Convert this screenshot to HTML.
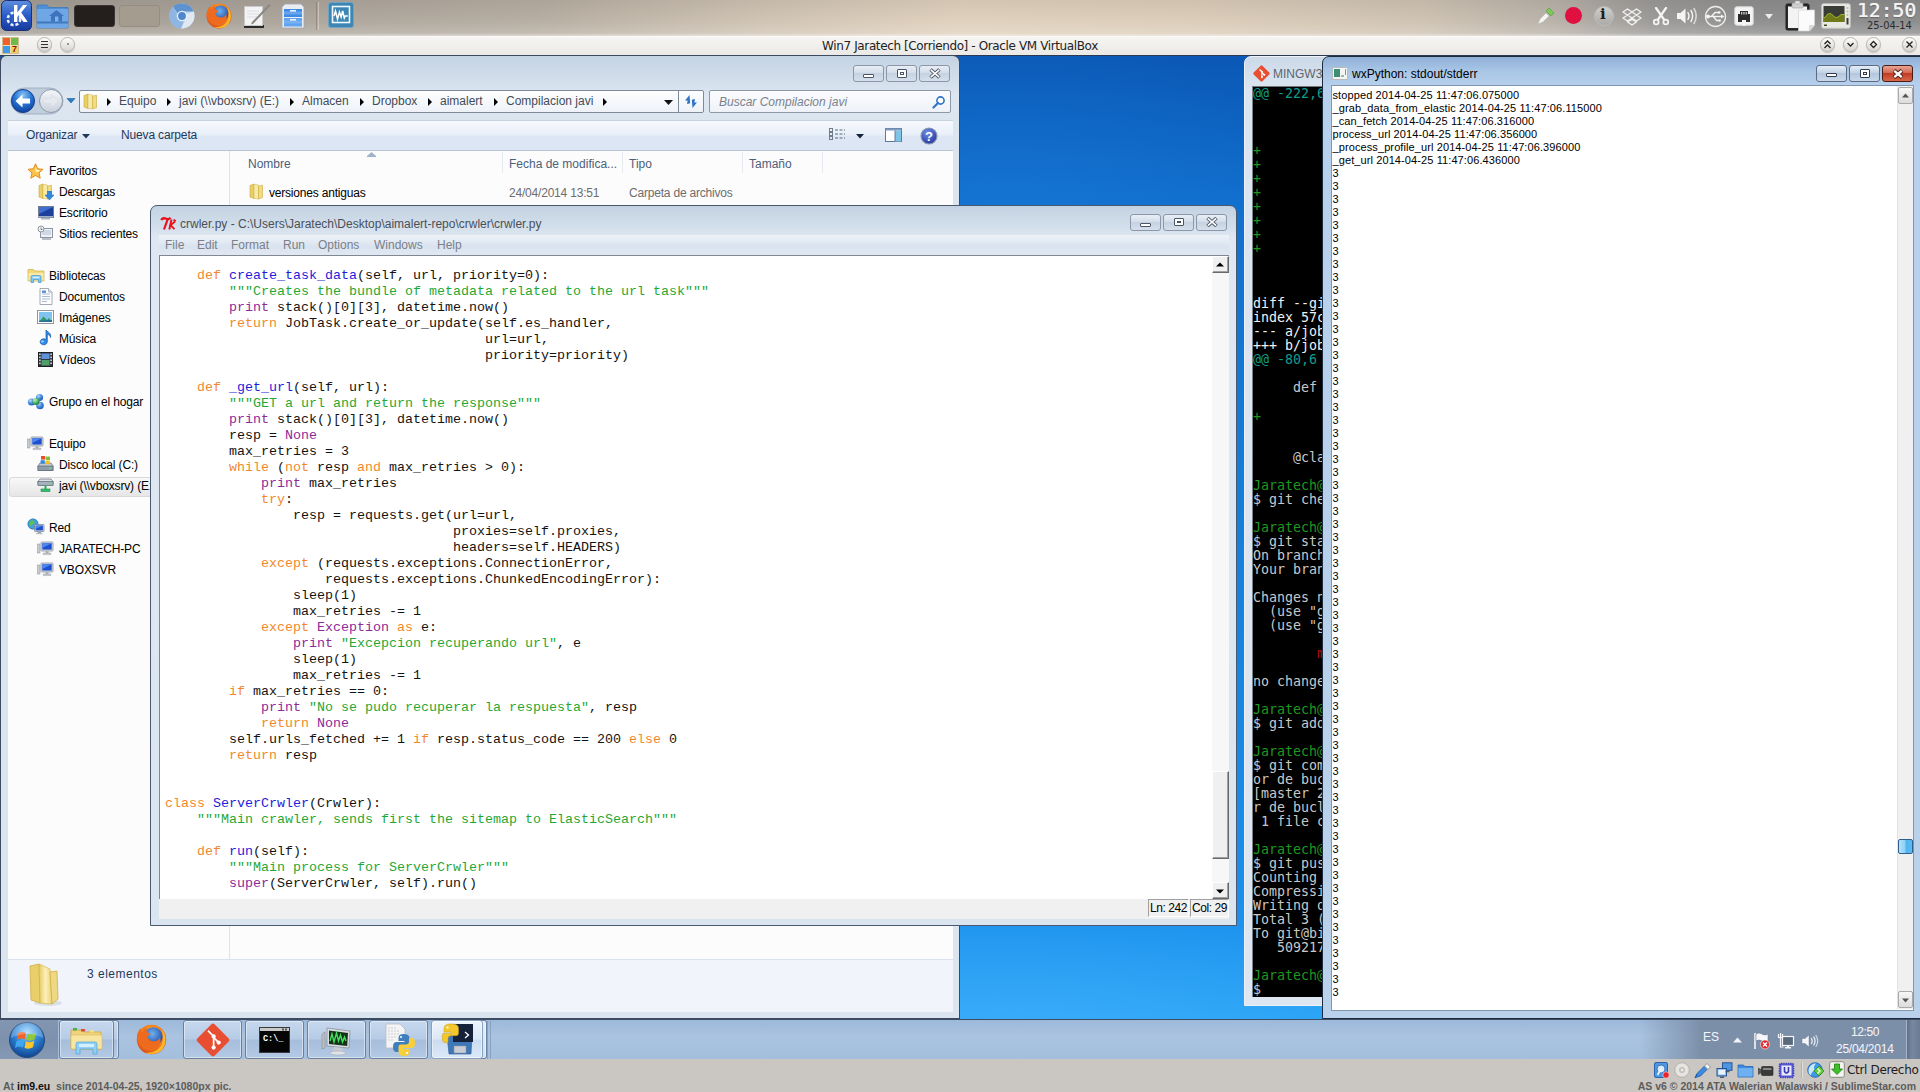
<!DOCTYPE html>
<html lang="es"><head><meta charset="utf-8"><title>Win7 Jaratech [Corriendo] - Oracle VM VirtualBox</title>
<style>
*{box-sizing:border-box}
html,body{margin:0;padding:0}
body{width:1920px;height:1092px;position:relative;overflow:hidden;background:#c9c6c2;font-family:"Liberation Sans",sans-serif;font-size:12px;color:#000}
.a{position:absolute}
.t{position:absolute;white-space:pre;line-height:1}
#kde{left:0;top:0;width:1920px;height:36px;background:linear-gradient(90deg,#9e9a94 0,#b3ada4 25%,#c9c0b2 50%,#d8cfc0 70%,#cfc8bc 100%)}
#vbt{left:0;top:36px;width:1920px;height:19px;background:linear-gradient(#f6f5f3,#ebe9e6);border-top:1px solid #fbfaf8}
#desk{left:0;top:55px;width:1920px;height:964px;background:radial-gradient(ellipse 500px 160px at 1000px 1000px,rgba(120,205,255,.32),rgba(120,205,255,0)),radial-gradient(ellipse 260px 200px at 1010px 150px,rgba(30,130,225,.28),rgba(30,130,225,0)),linear-gradient(180deg,#0b58b6 0,#1170ce 16%,#157fdc 50%,#1a8fec 88%,#24a0f6 100%);border-top:1px solid #2b3a52}
#tb{left:0;top:1019px;width:1920px;height:40px;background:linear-gradient(#9db9d9,#a9c3e0 40%,#a4bfdd);border-top:1px solid #3d4c63}
#vbs{left:0;top:1059px;width:1920px;height:22px;background:#cac7c3}
#ft{left:0;top:1081px;width:1920px;height:11px;background:#cac7c3}

#kde{background:linear-gradient(90deg,#a39d95 0,#aaa39a 12%,#b7aea2 28%,#d0c4b4 40%,#e0d1bd 50%,#dccdb9 62%,#cfc3b3 74%,#b9b2a9 81%,#9c9a98 86%,#8e8e8e 92%,#8c8c8c 100%)}
#kdeo{left:0;top:0;width:1920px;height:36px;background:linear-gradient(180deg,rgba(0,0,0,.06) 0,rgba(255,255,255,.02) 60%,rgba(255,255,255,.18) 92%,rgba(255,255,255,.55) 100%)}
#vbtx{left:0;top:3px;width:1920px;text-align:center;font-family:"DejaVu Sans","Liberation Sans",sans-serif;font-size:12px;color:#222;letter-spacing:-.38px}
.cb{position:absolute;top:0px;width:15px;height:15px;border-radius:8px;border:1px solid #b9b6b1;background:linear-gradient(#fdfdfc,#d8d5d0);box-shadow:0 1px 1px rgba(0,0,0,.18)}
.tk{position:absolute;top:0;height:39px;border:1px solid #68819f;border-radius:3px;background:linear-gradient(#c6d8ee 0,#b6cbe5 48%,#a6bedc 52%,#b4c9e4 100%);box-shadow:inset 0 0 0 1px rgba(255,255,255,.45)}
#tray{left:1640px;top:0;width:280px;height:39px;background:linear-gradient(90deg,rgba(124,143,169,0) 0,rgba(124,143,169,1) 22%,rgba(124,143,169,1) 100%)}
#tray .w{position:absolute;color:#f4f6f9;font-size:12px;line-height:1;white-space:pre}
#vbs .t,#ft .t{font-family:"DejaVu Sans","Liberation Sans",sans-serif}

#ex{left:-1px;top:55px;width:961px;height:964px;background:linear-gradient(#c4d3e3 0,#d0dcea 20px,#dde6f1 40px,#dbe5f0 64px,#dbe5f0 100%);border:1px solid #3d4a5f;border-left:2px solid #3d4a5f;border-radius:7px 7px 0 0;overflow:hidden}
#exa{left:77px;top:34px;width:625px;height:23px;border:1px solid #7e8a9a;background:linear-gradient(#fdfeff,#eef2f8);border-radius:2px}
#exa span{position:absolute;top:4px;font-size:12px;line-height:1;color:#444b56;white-space:pre}
#exa i{position:absolute;top:7px;width:0;height:0;border-left:4px solid #000;border-top:4px solid transparent;border-bottom:4px solid transparent}
#exs{left:707px;top:34px;width:242px;height:23px;border:1px solid #8c98a8;background:linear-gradient(#fbfcfe,#eef2f8);border-radius:2px}
#ext{left:6px;top:64px;width:945px;height:31px;background:linear-gradient(#f6f9fd 0,#e9f0f9 45%,#dce6f4 55%,#dde7f4 100%);border-top:1px solid #c8d3e0;border-bottom:1px solid #b8c4d4}
#ext span{position:absolute;top:8px;font-size:12px;line-height:1;color:#1e395b;white-space:pre;letter-spacing:-.15px}
#exb{left:6px;top:95px;width:945px;height:808px;background:#fcfcfc}
#exn{left:0;top:0;width:222px;height:808px;background:#fcfcfc;border-right:1px solid #d6e5f5}
#exn span{position:absolute;font-size:12px;line-height:1;color:#000;white-space:pre;letter-spacing:-.15px}
#exh span{position:absolute;top:7px;font-size:12px;line-height:1;color:#4c607a;white-space:pre}
#exd{left:6px;top:903px;width:945px;height:53px;background:#f1f5fb;border-top:1px solid #d9e3f0}

#id{left:150px;top:205px;width:1087px;height:721px;background:linear-gradient(#c3d2e2 0,#d2deeb 20px,#dfe8f2 32px,#dbe5f0 100%);border:1px solid #4b596e;border-radius:7px 7px 0 0}
#idt{left:29px;top:12px;font-size:12px;color:#4a5058}
#idm{left:8px;top:29px;width:1070px;height:19px;background:linear-gradient(#eef3f9,#d9e3ef 60%,#dfe7f2)}
#idm span{position:absolute;top:4px;font-size:12px;color:#7b8088;line-height:1;white-space:pre}
#idc{left:8px;top:49px;width:1070px;height:644px;background:#fff;border-top:1px solid #828790;border-left:1px solid #828790;overflow:hidden}
#idc pre{margin:0;position:absolute;left:5px;top:12px;font-family:"Liberation Mono",monospace;font-size:13.333px;line-height:16px;color:#141414}
#idc .k{color:#f2882e}#idc .f{color:#1c1cdc}#idc .s{color:#1fa838}#idc .b{color:#8e2a9a}
#ids{left:8px;top:693px;width:1070px;height:20px;background:#f0f0f0}
#idsb{left:1052px;top:0;width:17px;height:643px;background:#f7f7f7}
.sbk{position:absolute;left:0;width:17px;height:17px;background:#f0f0f0;border:1px solid;border-color:#fff #696969 #696969 #fff;box-shadow:inset -1px -1px 0 #a0a0a0}
.lc{position:absolute;top:0px;height:18px;border:1px solid;border-color:#a0a0a0 #fff #fff #a0a0a0;font-size:12px;line-height:16px;padding-left:1px;white-space:pre;letter-spacing:-0.45px}

#mg{left:1244px;top:56px;width:90px;height:950px;background:linear-gradient(#ccd9e8,#dbe5f1 30px,#dde6f1);border:1px solid #eef2f8;border-radius:7px 0 0 0;overflow:hidden}
#mgk{left:7px;top:29px;width:90px;height:911px;background:#000;border-left:1px solid #7a8288;border-top:1px solid #6f767c}
#mgk pre{margin:0;position:absolute;left:0px;top:0;font-family:"DejaVu Sans Mono","Liberation Mono",monospace;font-size:13.3px;line-height:14px;color:#c8c8c8;letter-spacing:0}
#mgk .g{color:#1f961f}#mgk .p{color:#1f961f;position:relative;top:1px}#mgk .c{color:#0f9d8c}#mgk .r{color:#b01010}#mgk .w{color:#f2f2f2}
#mgt{left:28px;top:11px;font-size:12px;color:#5d646c}
#wx{left:1322px;top:56px;width:600px;height:963px;background:linear-gradient(#8fb0d6 0,#a9c6e6 14px,#b7d0ec 30px,#b9d1ea 100%);border:1px solid #1c2b40;border-radius:7px 0 0 0}
#wxc{left:8px;top:28px;width:583px;height:926px;background:#fff;border:1px solid #8296ad}
#wxc pre{margin:0;position:absolute;left:.5px;top:3px;font-family:"Liberation Sans",sans-serif;font-size:11px;line-height:13px;color:#000;letter-spacing:0.1px}
#wxt{left:29px;top:11px;font-size:12px;color:#000}
#wxsb{left:565px;top:0;width:16px;height:923px;background:#f0f0f0;border-left:1px solid #e3e3e3}
.sbb{position:absolute;left:0px;width:15px;height:17px;border:1px solid #a9a9a9;border-radius:2px;background:linear-gradient(#f7f7f7,#dcdcdc)}
.wb{position:absolute;top:8px;height:17px;border:1px solid #5c6b82;border-radius:3px;background:linear-gradient(#e4edf7,#c3d3e6 45%,#b3c6dd 50%,#c9d8ea)}
.wbi{border-color:#8b97a8;background:linear-gradient(#e9eef5,#d3dde9 45%,#c6d2e1 50%,#d6e0ec)}
.wbx{border-color:#4a1a14;background:linear-gradient(#e8a493,#d46a55 45%,#c23a22 50%,#d8694a)}
</style></head>
<body>
<div id="kde" class="a"><div id="kdeo" class="a"></div><svg class="a" style="left:1px;top:0" width="31" height="31" viewBox="0 0 31 31"><defs><linearGradient id="kg" x1="0" y1="0" x2="0" y2="1"><stop offset="0" stop-color="#5f8fe0"/><stop offset=".5" stop-color="#2a5cc8"/><stop offset="1" stop-color="#173a9c"/></linearGradient></defs><rect x=".5" y=".5" width="30" height="30" rx="5" fill="url(#kg)" stroke="#1a2f78"/><circle cx="13" cy="19" r="6.2" fill="none" stroke="#e8eefc" stroke-width="2.6" stroke-dasharray="3 2"/><circle cx="13" cy="19" r="3.4" fill="#2a5cc8"/><path d="M13 5 h3.4 v7.5 L22 5 h4.2 l-6 7.6 6.6 9.4 h-4.4 l-4.6 -6.8 -1.4 1.8 v5 H13Z" fill="#fff"/></svg><svg class="a" style="left:36px;top:2px" width="33" height="27" viewBox="0 0 33 27"><path d="M1 3 h10 l2 2.5 h19 v20.5 H1Z" fill="#4f8fd8" stroke="#3f78bd" stroke-width=".8"/><rect x="1" y="7" width="31" height="19" rx="1" fill="#6fa6e6"/><rect x="1" y="19.5" width="31" height="2" fill="#3f78bd"/><path d="M13 14 L20.5 8 L28 14 h-2 v5.5 h-11 V14Z" fill="#3d74bd"/><rect x="19" y="14.5" width="3.4" height="5" fill="#7fb2ee"/></svg><div class="a" style="left:74px;top:5px;width:41px;height:22px;border-radius:3px;background:#241f1d;border:1px solid #3a3532"></div><div class="a" style="left:119px;top:5px;width:41px;height:22px;border-radius:3px;background:#a59c90;border:1px solid #968d82"></div><svg class="a" style="left:168px;top:2px" width="28" height="28" viewBox="0 0 28 28"><circle cx="14" cy="14" r="12.5" fill="#bcd3ee"/><path d="M14 1.5 A12.5 12.5 0 0 1 25.6 9.5 H14 A4.5 4.5 0 0 0 10 12 L5 4.8 A12.5 12.5 0 0 1 14 1.5Z" fill="#5f93cf"/><path d="M25.6 9.5 A12.5 12.5 0 0 1 13 26.4 L18 17 A4.8 4.8 0 0 0 18.6 12Z" fill="#dfe8f3"/><path d="M5 4.8 L10 13.5 A4.6 4.6 0 0 0 16 18.2 L13 26.4 A12.5 12.5 0 0 1 5 4.8Z" fill="#8fb6e2"/><circle cx="14" cy="14" r="4.6" fill="#4f86cc" stroke="#e8eff8" stroke-width="1.4"/></svg><svg class="a" style="left:205px;top:2px" width="28" height="28" viewBox="0 0 28 28"><defs><radialGradient id="ffo" cx=".5" cy=".4" r=".6"><stop offset="0" stop-color="#ffd23a"/><stop offset=".6" stop-color="#f78a1c"/><stop offset="1" stop-color="#d9451a"/></radialGradient><radialGradient id="ffb" cx=".45" cy=".35" r=".7"><stop offset="0" stop-color="#6fb2f0"/><stop offset="1" stop-color="#1d3f9c"/></radialGradient></defs><circle cx="14" cy="14" r="12.500" fill="url(#ffo)"/><circle cx="15.500" cy="11.500" r="8" fill="url(#ffb)"/><path d="M1.600 13 C1.500 9 3 6 5 4.500 C5 6 5.500 7 6.500 7.500 C7 5.500 8.500 4 10.500 3.500 C9.500 5 9.500 6.500 10.500 8 C12 8.200 13 9 13.500 10 C12 10 11 10.500 10.500 11.500 C11 14 13 15.500 16 15.500 C19 15.500 20.500 14 21 12 C22.500 15 21.500 19 18.500 21 C15 23 10 22.500 7 20 C4 18 2 16 1.600 13Z" fill="#ee6a1e"/><path d="M22 5 C26.500 9 27.500 17 23 22.500 C19.500 26.500 13 27.500 8 25 C14 26 20 23.500 22.500 18.500 C24.500 14 24 9 22 5Z" fill="#fbb82a"/></svg><svg class="a" style="left:243px;top:3px" width="30" height="26" viewBox="0 0 30 26"><rect x="1" y="22" width="20" height="3" fill="#2a2a2a"/><rect x="1.5" y="3.5" width="18" height="19" fill="#f4f4f4" stroke="#c9c9c9"/><path d="M4 8 h12 M4 11 h12 M4 14 h10" stroke="#d9dde6" stroke-width="1"/><path d="M26 1 L9 19 L8 21.5 L10.5 20.5 L27.5 2.5Z" fill="#8c8880"/></svg><svg class="a" style="left:281px;top:3px" width="24" height="26" viewBox="0 0 24 26"><path d="M4 1 h16 l3 3 v21 H1 V4Z" fill="#e9ecf0" stroke="#9ea6b0" stroke-width=".8"/><rect x="3" y="6" width="18" height="8" fill="#3f8ae6"/><rect x="3" y="15" width="18" height="8.5" fill="#5fa2ee"/><path d="M3 10 h18 M3 19 h18" stroke="#8fc0f6" stroke-width="3" opacity=".5"/><rect x="9" y="7" width="6" height="1.6" fill="#eaf0f8"/><rect x="9" y="16" width="6" height="1.6" fill="#eaf0f8"/></svg><div class="a" style="left:316px;top:2px;width:1px;height:28px;background:rgba(120,110,100,.45)"></div><div class="a" style="left:318px;top:2px;width:1px;height:28px;background:rgba(235,228,215,.5)"></div><svg class="a" style="left:328px;top:2px" width="26" height="26" viewBox="0 0 26 26"><rect x=".5" y=".5" width="25" height="25" rx="2.5" fill="#3d86b4" stroke="#6fa3c6"/><rect x="4.5" y="4.5" width="17" height="16" fill="#3d86b4" stroke="#f1f7fb" stroke-width="1.6"/><path d="M6 14 l1.5 -5 2 8 2 -7 1.6 5 1.6 -6 1.6 7 1 -2 h2.5" stroke="#fff" stroke-width="1.5" fill="none"/></svg><svg class="a" style="left:1537px;top:7px" width="18" height="18" viewBox="0 0 18 18"><path d="M1 17 L3 12 L9 6 L12 9 L6 15Z" fill="#f4f4f2" stroke="#b9b9b5" stroke-width=".6"/><path d="M9 4 L12 1 L17 6 L14 9Z" fill="#7fc95a" stroke="#4f9a38" stroke-width=".6"/></svg><div class="a" style="left:1565px;top:7px;width:17px;height:17px;border-radius:9px;background:#e01040"></div><div class="a" style="left:1594px;top:6px;width:20px;height:20px;border-radius:10px;background:linear-gradient(#cfcfcd,#a9a9a7);border:1px solid #bdbdbb"></div><div class="t" style="left:1600px;top:7px;font-family:'DejaVu Serif','Liberation Serif',serif;font-size:15px;font-weight:bold;color:#1d1d1d">i</div><svg class="a" style="left:1622px;top:8px" width="20" height="18" viewBox="0 0 20 18"><g fill="none" stroke="#f1f1f1" stroke-width="1.4" stroke-linejoin="round"><path d="M5.5 1 L10 4 L5.5 7 L1 4Z M14.500 1 L19 4 L14.500 7 L10 4Z M5.5 7 L10 10 L5.5 13 L1 10Z M14.500 7 L19 10 L14.500 13 L10 10Z M5.5 14 L10 11.500 L14.500 14 L10 17Z"/></g></svg><svg class="a" style="left:1652px;top:7px" width="18" height="19" viewBox="0 0 18 19"><g stroke="#f4f4f4" fill="none" stroke-width="2.2" stroke-linecap="round"><path d="M4 1 L12 12.500 M14 1 L6 12.500"/><circle cx="4.200" cy="15" r="2.400" stroke-width="1.8"/><circle cx="13.800" cy="15" r="2.400" stroke-width="1.8"/></g></svg><svg class="a" style="left:1676px;top:5px" width="24" height="22" viewBox="0 0 24 22"><path d="M1 8 h3.500 L9.500 3.500 v15 L4.500 14 H1Z" fill="#f4f4f4"/><g fill="none" stroke="#f1f1f1" stroke-width="1.5" stroke-linecap="round"><path d="M12 7.500 q2 3.500 0 7"/><path d="M15 5.500 q3.200 5.500 0 11"/><path d="M18 3.500 q4.400 7.500 0 15" opacity=".75"/></g></svg><svg class="a" style="left:1704px;top:5px" width="23" height="23" viewBox="0 0 23 23"><circle cx="11.500" cy="11.500" r="10" fill="none" stroke="#ececec" stroke-width="1.3"/><g stroke="#f4f4f4" stroke-width="1.4" fill="none"><path d="M3.500 11.500 H18"/><path d="M7.500 11.500 L11 7.500 h3.500 M9.500 11.500 L12.500 15.500 h2.500"/></g><circle cx="4" cy="11.500" r="2" fill="#f4f4f4"/><path d="M17 9.500 l3.500 2 -3.500 2z" fill="#f4f4f4"/><rect x="14" y="6.300" width="2.400" height="2.400" fill="#f4f4f4"/><circle cx="15.600" cy="15.500" r="1.300" fill="#f4f4f4"/></svg><svg class="a" style="left:1734px;top:6px" width="20" height="21" viewBox="0 0 20 21"><rect x=".8" y=".8" width="18.400" height="18.400" rx="2" fill="#f4f4f4" stroke="#dadada"/><path d="M4 16 V8 h2 V5 h8 v3 h2 v8 h-4 v-2 H8 v2Z" fill="#2c2c2c"/><g stroke="#f4f4f4" stroke-width=".8"><path d="M7.500 6 v2.500 M9.200 6 v2.500 M10.900 6 v2.500 M12.600 6 v2.500"/></g><rect x="8.800" y="14" width="2.400" height="6" fill="#f4f4f4"/></svg><svg class="a" style="left:1765px;top:14px" width="8" height="5"><path d="M0 0 h8 l-4 5z" fill="#ececec"/></svg><svg class="a" style="left:1785px;top:0" width="31" height="32" viewBox="0 0 31 32"><rect x="1" y="4" width="23" height="26" rx="1.500" fill="#2b2b2b" stroke="#1c1c1c"/><rect x="3" y="6.500" width="19" height="21.500" fill="#f3f3f3"/><rect x="7" y="3" width="11" height="5" rx="1" fill="#cfcfcf" stroke="#9f9f9f" stroke-width=".6"/><rect x="10" y="1" width="5" height="3" rx="1" fill="#e4e4e4" stroke="#a9a9a9" stroke-width=".6"/><path d="M13.500 10 h16 v15.500 L24.500 31 h-11Z" fill="#fbfbfb" stroke="#d4d4d4" stroke-width=".7"/><path d="M29.500 25.500 h-5 v5.500z" fill="#dcdcdc" stroke="#c4c4c4" stroke-width=".5"/></svg><svg class="a" style="left:1821px;top:3px" width="30" height="26" viewBox="0 0 30 26"><rect x=".7" y=".7" width="28.600" height="24.600" rx="1.800" fill="#e9e9e4" stroke="#c4c4bd"/><rect x="2.500" y="3" width="21" height="16" fill="#3a3d36"/><path d="M2.500 19 V15 C5 15 5.500 10.500 8.500 10.500 C11.500 10.500 12.500 14.500 15.500 14.500 C18 14.500 18.500 11.500 21 11.500 L23.500 11.500 V19Z" fill="#707a1a"/><path d="M2.500 15 C5 15 5.500 10.500 8.500 10.500 C11.500 10.500 12.500 14.500 15.500 14.500 C18 14.500 18.500 11.500 21 11.500 L23.500 11.500" stroke="#a9b82a" stroke-width="1" fill="none"/><circle cx="26.500" cy="5" r="1.100" fill="#bdbdb6"/><circle cx="26.500" cy="8.500" r="1.100" fill="#bdbdb6"/><circle cx="26.500" cy="12" r="1.100" fill="#bdbdb6"/><rect x="25.500" y="15" width="2" height="6.500" fill="#3a3a3a"/><rect x="3" y="21.500" width="3" height="1.500" fill="#3f4a1a"/></svg><div class="t" style="left:1857px;top:1px;font-family:'DejaVu Sans Mono',monospace;font-size:19.700px;color:#f3f3f3;text-shadow:0 0 .7px #f3f3f3,0 1px 1px rgba(60,60,60,.55)">12:50</div><div class="t" style="left:1867px;top:21px;font-family:'DejaVu Sans',sans-serif;font-size:9.900px;color:#2a2a2a">25-04-14</div></div>
<div id="vbt" class="a"><svg class="a" style="left:2px;top:0" width="17" height="17" viewBox="0 0 17 17"><rect x=".5" y=".5" width="16" height="16" fill="#f0e0b0" stroke="#b9a070" stroke-width=".6"/><path d="M1 1 h7 v7 H1Z" fill="#f0602a"/><path d="M9 1 h7 v7 H9Z" fill="#6fba4a"/><path d="M1 9 h7 v7 H1Z" fill="#3f9ae8"/><path d="M9 9 h7 v7 H9Z" fill="#f4cf5a"/><text x="12.500" y="14.500" text-anchor="middle" font-family="Liberation Sans,sans-serif" font-weight="bold" font-size="9" fill="#8a1010">7</text></svg><div class="cb" style="left:37px"><div class="a" style="left:3px;top:3px;width:7px;height:1px;background:#333;box-shadow:0 3px 0 #333,0 6px 0 #333"></div></div><div class="cb" style="left:60px"><div class="a" style="left:6px;top:5px;width:2px;height:2px;border-radius:1px;background:#777"></div></div><div id="vbtx" class="t">Win7 Jaratech [Corriendo] - Oracle VM VirtualBox</div><div class="cb" style="left:1820px"><svg class="a" style="left:1px;top:1px" width="11" height="11" viewBox="0 0 11 11"><g stroke="#222" stroke-width="1.300" fill="none"><path d="M2.500 5 L5.500 2 L8.500 5 M2.500 9 L5.500 6 L8.500 9"/></g></svg></div><div class="cb" style="left:1843px"><svg class="a" style="left:1px;top:1px" width="11" height="11" viewBox="0 0 11 11"><g stroke="#222" stroke-width="1.300" fill="none"><path d="M2.500 4 L5.500 7 L8.500 4"/></g></svg></div><div class="cb" style="left:1866px"><svg class="a" style="left:1px;top:1px" width="11" height="11" viewBox="0 0 11 11"><g stroke="#222" stroke-width="1.300" fill="none"><path d="M5.500 2.500 L8.500 5.500 L5.500 8.500 L2.500 5.500Z"/></g></svg></div><div class="cb" style="left:1902px"><svg class="a" style="left:1px;top:1px" width="11" height="11" viewBox="0 0 11 11"><g stroke="#222" stroke-width="1.300" fill="none"><path d="M2.500 2.500 L8.500 8.500 M8.500 2.500 L2.500 8.500"/></g></svg></div></div>
<div id="desk" class="a"></div>
<div id="ex" class="a"><div class="a" style="left:1px;top:0;width:958px;height:962px"><div class="wb wbi" style="left:851px;width:31px;top:9px;height:17px"><div class="a" style="left:9px;top:8px;width:11px;height:4px;border:1px solid #4a5566;background:#fff;border-radius:1px"></div></div><div class="wb wbi" style="left:884px;width:31px;top:9px;height:17px"><div class="a" style="left:10px;top:3px;width:10px;height:9px;border:1px solid #4a5566;background:#fff;border-radius:1px"><div class="a" style="left:2px;top:2px;width:4px;height:3px;border:1px solid #4a5566"></div></div></div><div class="wb wbi" style="left:917px;width:31px;top:9px;height:17px"><svg class="a" style="left:9px;top:2px" width="12" height="11" viewBox="0 0 12 10"><path d="M1.5 1 L10.5 9 M10.5 1 L1.5 9" stroke="#4a5566" stroke-width="3.4"/><path d="M1.8 1.3 L10.2 8.7 M10.2 1.3 L1.8 8.7" stroke="#fff" stroke-width="1.6"/></svg></div><svg class="a" style="left:5px;top:29px" width="74" height="32" viewBox="0 0 74 32"><defs><radialGradient id="bk" cx=".5" cy=".25" r=".8"><stop offset="0" stop-color="#8cc4f6"/><stop offset=".45" stop-color="#2a78d6"/><stop offset="1" stop-color="#0b3a96"/></radialGradient><linearGradient id="fw" x1="0" y1="0" x2="0" y2="1"><stop offset="0" stop-color="#f4f6f9"/><stop offset="1" stop-color="#c9d1dc"/></linearGradient></defs><path d="M4 16 a13 13 0 0 1 13 -13 h26 a13 13 0 0 1 0 26 h-26 a13 13 0 0 1 -13 -13z" fill="#bccadb" stroke="#8d9db2" stroke-width=".8" opacity=".85"/><circle cx="16" cy="16" r="11.5" fill="url(#bk)" stroke="#16408c" stroke-width="1"/><path d="M8.5 16 L15.5 9.5 V13.5 H23 V18.5 H15.5 V22.5Z" fill="#fff"/><circle cx="44" cy="16" r="11.5" fill="url(#fw)" stroke="#8e99a8" stroke-width="1"/><path d="M51.5 16 L44.5 9.5 V13.5 H37 V18.5 H44.5 V22.5Z" fill="#e6eaef" stroke="#d2d8e0" stroke-width=".5"/><path d="M60 13.5 h8 l-4 4.5z" fill="#2a7fc4" stroke="#1c5f99" stroke-width=".6"/></svg><div id="exa" class="a"><svg class="a" style="left:3px;top:2px" width="15" height="17" viewBox="0 0 15 17"><path d="M1 2.5 L5 1 L5 15.5 L1 14Z" fill="#e9cf6a" stroke="#c9a93a" stroke-width=".6"/><path d="M5 1.2 L9.5 2 L9.5 16 L5 15.4Z" fill="#f7e9a8" stroke="#d3b54a" stroke-width=".5"/><path d="M9.5 3.2 L13.5 2.2 L13.5 14.5 L9.5 16Z" fill="#f2dc83" stroke="#c9a93a" stroke-width=".6"/></svg><i style="left:27px"></i><i style="left:87px"></i><i style="left:210px"></i><i style="left:280px"></i><i style="left:348px"></i><i style="left:414px"></i><i style="left:523px"></i><span style="left:39px">Equipo</span><span style="left:99px">javi (\\vboxsrv) (E:)</span><span style="left:222px">Almacen</span><span style="left:292px">Dropbox</span><span style="left:360px">aimalert</span><span style="left:426px">Compilacion javi</span><svg class="a" style="left:584px;top:9px" width="9" height="5"><path d="M0 0 h9 l-4.5 5z" fill="#111"/></svg><div class="a" style="left:598px;top:-1px;width:1px;height:23px;background:#7e8a9a"></div><svg class="a" style="left:603px;top:3px" width="16" height="15" viewBox="0 0 16 15"><path d="M6.5 1 L2 6.5 h2.6 l-.6 3.4 3.2-.6z" fill="#2f74c6"/><path d="M9.5 14 L14 8.5 h-2.6 l.6-3.4 -3.2.6z" fill="#2f74c6"/></svg></div><div id="exs" class="a"><div class="t" style="left:9px;top:5px;font-size:12px;font-style:italic;color:#7b828c">Buscar Compilacion javi</div><svg class="a" style="left:222px;top:4px" width="14" height="14" viewBox="0 0 14 14"><circle cx="8.5" cy="5.5" r="3.6" fill="#fff" stroke="#2f74c6" stroke-width="1.6"/><path d="M6 8 L1.5 12.5" stroke="#2f74c6" stroke-width="2.2" stroke-linecap="round"/></svg></div><div id="ext" class="a"><span style="left:18px">Organizar</span><svg class="a" style="left:74px;top:13px" width="8" height="5"><path d="M0 0 h8 l-4 4.5z" fill="#1e395b"/></svg><span style="left:113px">Nueva carpeta</span><svg class="a" style="left:821px;top:7px" width="18" height="14" viewBox="0 0 18 14"><g fill="none" stroke="#6f7c8c" stroke-width="1"><rect x=".5" y=".5" width="3" height="3"/><rect x=".5" y="4.5" width="3" height="3"/><rect x=".5" y="8.5" width="3" height="3"/></g><g stroke="#5c6a7c" stroke-width="1.2" stroke-dasharray="3 1.5"><path d="M6 2 h10 M6 6 h10 M6 10 h10"/></g></svg><svg class="a" style="left:848px;top:13px" width="8" height="5"><path d="M0 0 h8 l-4 4.5z" fill="#14243a"/></svg><svg class="a" style="left:877px;top:7px" width="17" height="15" viewBox="0 0 17 15"><rect x=".5" y=".5" width="16" height="13" fill="#fff" stroke="#5c7aa0"/><rect x=".5" y=".5" width="16" height="2" fill="#7f9cc0"/><rect x="10" y="2.5" width="6" height="11" fill="#7fc3e6"/><path d="M10 2.5 v11" stroke="#5c7aa0"/></svg><svg class="a" style="left:912px;top:6px" width="18" height="18" viewBox="0 0 18 18"><defs><radialGradient id="hp" cx=".4" cy=".3" r=".8"><stop offset="0" stop-color="#6f8fe6"/><stop offset="1" stop-color="#1c2f9c"/></radialGradient></defs><circle cx="9" cy="9" r="8" fill="url(#hp)" stroke="#8a97ad" stroke-width="1.2"/><text x="9" y="13.5" text-anchor="middle" font-family="Liberation Sans,sans-serif" font-weight="bold" font-size="13" fill="#fff">?</text></svg></div><div id="exb" class="a"><div id="exn" class="a"><svg class="a" style="left:19px;top:12px" width="17" height="16" viewBox="0 0 17 16"><path d="M8.5 .8 L10.7 5.8 L16 6.3 L12 9.9 L13.2 15.2 L8.5 12.4 L3.8 15.2 L5 9.9 L1 6.3 L6.3 5.8Z" fill="#fbc54a" stroke="#e08a1e" stroke-width="1"/><path d="M8.5 3.5 L9.8 6.8 L13 7.2 L10.6 9.4 L8.5 8.2Z" fill="#fff2c0"/></svg><span style="left:41px;top:14px">Favoritos</span><svg class="a" style="left:30px;top:32px" width="15" height="17" viewBox="0 0 15 17"><path d="M1 2.5 L5 1 L5 15.5 L1 14Z" fill="#e9cf6a" stroke="#c9a93a" stroke-width=".6"/><path d="M5 1.2 L9.5 2 L9.5 16 L5 15.4Z" fill="#f7e9a8" stroke="#d3b54a" stroke-width=".5"/><path d="M9.5 3.2 L13.5 2.2 L13.5 14.5 L9.5 16Z" fill="#f2dc83" stroke="#c9a93a" stroke-width=".6"/></svg><svg class="a" style="left:37px;top:40px" width="9" height="9"><path d="M2.5 0 h4 v4 h2.5 l-4.5 5 l-4.5 -5 h2.5z" fill="#2f8ae0" stroke="#1d62b0" stroke-width=".5"/></svg><span style="left:51px;top:35px">Descargas</span><svg class="a" style="left:29px;top:55px" width="17" height="14" viewBox="0 0 17 14"><rect x="1.500" y=".5" width="15" height="11" fill="#1d409c" stroke="#6f7c90"/><path d="M2 1 h14 L2 8Z" fill="#3f6fd0"/><rect x="1" y="10" width="15" height="1.5" fill="#9fb0c8"/><rect x="4" y="12" width="9" height="1.5" fill="#aab2bd"/></svg><span style="left:51px;top:56px">Escritorio</span><svg class="a" style="left:29px;top:74px" width="17" height="16" viewBox="0 0 17 16"><rect x="3.5" y="3.5" width="12" height="9" fill="#eef1f5" stroke="#8d96a2"/><rect x="5" y="5" width="9" height="5" fill="#cfd8e4"/><rect x="1" y="1" width="6" height="6" rx="3" fill="#f4f6f8" stroke="#8d96a2"/><path d="M4 2.5 v2 h1.5" stroke="#59626e" fill="none" stroke-width=".8"/><rect x="5" y="13" width="9" height="2" fill="#b7bec8"/></svg><span style="left:51px;top:77px">Sitios recientes</span><svg class="a" style="left:19px;top:116px" width="18" height="16" viewBox="0 0 18 16"><path d="M1 2.500 h5.500 l1.500 1.500 H17 v10 H1Z" fill="#f1d878" stroke="#d0ad44" stroke-width=".7"/><path d="M1.500 6 H16.500 V13.500 H1.500Z" fill="#f8e9a6"/><path d="M4 15.500 V10 q0 -1.500 1.500 -1.500 h7 q1.500 0 1.500 1.500 V15.500 h-2.600 v-3 H6.600 v3Z" fill="#7cc6f2" stroke="#3f98d4" stroke-width=".7"/><rect x="5.600" y="9.600" width="6.800" height="1.600" fill="#d4eefc"/></svg><span style="left:41px;top:119px">Bibliotecas</span><svg class="a" style="left:31px;top:137px" width="14" height="17" viewBox="0 0 14 17"><path d="M1 .5 H9.5 L13 4 V16.5 H1Z" fill="#fdfdfd" stroke="#8d96a2" stroke-width=".8"/><path d="M9.5 .5 V4 H13" fill="#dfe4ea" stroke="#8d96a2" stroke-width=".6"/><path d="M3 6 h8 M3 8.5 h8 M3 11 h8 M3 13.5 h5" stroke="#9fb4cc" stroke-width=".9"/><rect x="3" y="2.5" width="4" height="2.4" fill="#5c8fd0"/></svg><span style="left:51px;top:140px">Documentos</span><svg class="a" style="left:29px;top:159px" width="17" height="14" viewBox="0 0 17 14"><rect x=".5" y=".5" width="16" height="13" fill="#fff" stroke="#8d96a2"/><rect x="2" y="2" width="13" height="10" fill="#7fc3ee"/><path d="M2 12 L6.5 6.5 L10 10 L12 8 L15 12Z" fill="#2f9a68"/><path d="M2 12 h13 v-2 L2 10.8Z" fill="#256f9c"/></svg><span style="left:51px;top:161px">Imágenes</span><svg class="a" style="left:30px;top:178px" width="15" height="17" viewBox="0 0 15 17"><path d="M8 1 C10 3.5 13.5 4 12.5 8.5 C12.3 6.5 10.5 5.5 9.3 5.3 V13 A3.6 3 0 1 1 8 10.5Z" fill="#2f8ae6" stroke="#1857a8" stroke-width=".7"/><ellipse cx="4.5" cy="12.4" rx="1.6" ry="1" fill="#bfe0ff" opacity=".8"/></svg><span style="left:51px;top:182px">Música</span><svg class="a" style="left:30px;top:201px" width="15" height="15" viewBox="0 0 15 15"><rect x=".5" y=".5" width="14" height="14" fill="#30363e" stroke="#1d2127"/><rect x="3.5" y="1.5" width="8" height="5.5" fill="#5f93d8"/><rect x="3.5" y="8" width="8" height="5.5" fill="#4f9f68"/><g fill="#e8ecf0"><rect x="1.2" y="1.5" width="1.4" height="1.6"/><rect x="1.2" y="4.5" width="1.4" height="1.6"/><rect x="1.2" y="7.5" width="1.4" height="1.6"/><rect x="1.2" y="10.5" width="1.4" height="1.6"/><rect x="12.4" y="1.5" width="1.4" height="1.6"/><rect x="12.4" y="4.5" width="1.4" height="1.6"/><rect x="12.4" y="7.5" width="1.4" height="1.6"/><rect x="12.4" y="10.5" width="1.4" height="1.6"/></g></svg><span style="left:51px;top:203px">Vídeos</span><svg class="a" style="left:19px;top:242px" width="18" height="17" viewBox="0 0 18 17"><defs><radialGradient id="gb" cx=".35" cy=".3" r=".8"><stop offset="0" stop-color="#b8dcff"/><stop offset=".5" stop-color="#3f8ae0"/><stop offset="1" stop-color="#1c4fb0"/></radialGradient><radialGradient id="gg" cx=".35" cy=".3" r=".8"><stop offset="0" stop-color="#c8f0c0"/><stop offset=".6" stop-color="#3fa85a"/><stop offset="1" stop-color="#1f7038"/></radialGradient></defs><circle cx="4.5" cy="9" r="3.6" fill="url(#gb)"/><circle cx="12.5" cy="4.5" r="3.6" fill="url(#gb)"/><circle cx="13" cy="12.5" r="3.8" fill="url(#gb)"/><circle cx="9" cy="8.5" r="3.6" fill="url(#gg)"/></svg><span style="left:41px;top:245px">Grupo en el hogar</span><svg class="a" style="left:19px;top:285px" width="17" height="15" viewBox="0 0 17 15"><rect x="0.5" y="3" width="2.5" height="9" fill="#c9cdd2" stroke="#8a9097" stroke-width=".5"/><rect x="4" y="1" width="12" height="9" rx=".8" fill="#d9dde2" stroke="#7f868e" stroke-width=".7"/><rect x="5.3" y="2.2" width="9.4" height="6.4" fill="#1d4fd0"/><path d="M5.3 2.2 h9.4 L5.3 7Z" fill="#4f86ee"/><rect x="8.5" y="10" width="3" height="2" fill="#b0b5bb"/><rect x="6" y="12" width="8" height="1.6" rx=".6" fill="#c5c9ce" stroke="#8a9097" stroke-width=".4"/></svg><span style="left:41px;top:287px">Equipo</span><svg class="a" style="left:29px;top:304px" width="17" height="17" viewBox="0 0 17 17"><path d="M1 11 L3 8 H14 L16 11 V15.5 H1Z" fill="#c3cbd4" stroke="#6f7a88" stroke-width=".8"/><rect x="1" y="11" width="15" height="4.5" fill="#8f9caa" stroke="#5c6876" stroke-width=".7"/><rect x="12" y="12.5" width="2.5" height="1.4" fill="#5fe06a"/><g><rect x="4" y="1" width="4.2" height="3.6" fill="#e8502a"/><rect x="8.8" y="1.6" width="4.2" height="3.6" fill="#7fc03a"/><rect x="3.6" y="5.2" width="4.2" height="3.4" fill="#2f8ae0"/><rect x="8.4" y="5.8" width="4.2" height="3.4" fill="#f4c020"/></g></svg><span style="left:51px;top:308px">Disco local (C:)</span><div class="a" style="left:1px;top:326px;width:222px;height:20px;background:linear-gradient(#f8f8f8,#e6e6e6);border:1px solid #d9d9d9;border-radius:3px"></div><svg class="a" style="left:29px;top:326px" width="17" height="16" viewBox="0 0 17 16"><path d="M1 4.5 L3 2 H14 L16 4.5 V8 H1Z" fill="#dde2e8" stroke="#6f7a88" stroke-width=".8"/><rect x="1" y="4.5" width="15" height="3.8" fill="#a9b3bf" stroke="#5c6876" stroke-width=".7"/><rect x="12.2" y="5.6" width="2.2" height="1.3" fill="#5fe06a"/><path d="M8.5 8.5 V12" stroke="#2fa860" stroke-width="2"/><rect x="4" y="12" width="9" height="2.6" fill="#2fc070" stroke="#1f8a4c" stroke-width=".6"/></svg><span style="left:51px;top:329px">javi (\\vboxsrv) (E:)</span><svg class="a" style="left:19px;top:367px" width="18" height="17" viewBox="0 0 18 17"><circle cx="6" cy="6" r="5.2" fill="#3f9fe0" stroke="#1f6fb0" stroke-width=".6"/><path d="M3 3.5 q2 -2 4 -.5 q1.5 2 -.5 3 q-2 .5 -2.5 2.5 q-2 -1 -1 -5z" fill="#5fc05a"/><rect x="7.5" y="6.5" width="9.5" height="7" rx=".6" fill="#d9dde2" stroke="#6f7a88" stroke-width=".7"/><rect x="8.6" y="7.6" width="7.3" height="4.8" fill="#1d4fd0"/><path d="M8.6 7.6 h7.3 L8.6 11Z" fill="#4f86ee"/><rect x="10.5" y="13.5" width="3.5" height="1.6" fill="#9aa2ac"/><rect x="9" y="15" width="6.5" height="1.2" fill="#b7bec8"/></svg><span style="left:41px;top:371px">Red</span><svg class="a" style="left:29px;top:390px" width="17" height="15" viewBox="0 0 17 15"><rect x="0.5" y="3" width="2.5" height="9" fill="#c9cdd2" stroke="#8a9097" stroke-width=".5"/><rect x="4" y="1" width="12" height="9" rx=".8" fill="#d9dde2" stroke="#7f868e" stroke-width=".7"/><rect x="5.3" y="2.2" width="9.4" height="6.4" fill="#1d4fd0"/><path d="M5.3 2.2 h9.4 L5.3 7Z" fill="#4f86ee"/><rect x="8.5" y="10" width="3" height="2" fill="#b0b5bb"/><rect x="6" y="12" width="8" height="1.6" rx=".6" fill="#c5c9ce" stroke="#8a9097" stroke-width=".4"/></svg><span style="left:51px;top:392px">JARATECH-PC</span><svg class="a" style="left:29px;top:411px" width="17" height="15" viewBox="0 0 17 15"><rect x="0.5" y="3" width="2.5" height="9" fill="#c9cdd2" stroke="#8a9097" stroke-width=".5"/><rect x="4" y="1" width="12" height="9" rx=".8" fill="#d9dde2" stroke="#7f868e" stroke-width=".7"/><rect x="5.3" y="2.2" width="9.4" height="6.4" fill="#1d4fd0"/><path d="M5.3 2.2 h9.4 L5.3 7Z" fill="#4f86ee"/><rect x="8.5" y="10" width="3" height="2" fill="#b0b5bb"/><rect x="6" y="12" width="8" height="1.6" rx=".6" fill="#c5c9ce" stroke="#8a9097" stroke-width=".4"/></svg><span style="left:51px;top:413px">VBOXSVR</span></div><div id="exh" class="a" style="left:223px;top:0;width:722px;height:26px"><span style="left:17px">Nombre</span><span style="left:278px">Fecha de modifica...</span><span style="left:398px">Tipo</span><span style="left:518px">Tamaño</span><div class="a" style="left:271px;top:1px;width:1px;height:21px;background:#e6ebf2"></div><div class="a" style="left:391px;top:1px;width:1px;height:21px;background:#e6ebf2"></div><div class="a" style="left:511px;top:1px;width:1px;height:21px;background:#e6ebf2"></div><div class="a" style="left:591px;top:1px;width:1px;height:21px;background:#e6ebf2"></div><svg class="a" style="left:136px;top:1px" width="9" height="5"><path d="M0 4.5 L4.5 .5 L9 4.5Z" fill="#9fb4cc" stroke="#7f98b5" stroke-width=".6"/></svg></div><svg class="a" style="left:241px;top:32px" width="15" height="17" viewBox="0 0 15 17"><path d="M1 2.5 L5 1 L5 15.5 L1 14Z" fill="#e9cf6a" stroke="#c9a93a" stroke-width=".6"/><path d="M5 1.2 L9.5 2 L9.5 16 L5 15.4Z" fill="#f7e9a8" stroke="#d3b54a" stroke-width=".5"/><path d="M9.5 3.2 L13.5 2.2 L13.5 14.5 L9.5 16Z" fill="#f2dc83" stroke="#c9a93a" stroke-width=".6"/></svg><div class="t" style="left:261px;top:36px;font-size:12px;color:#000;letter-spacing:-.2px">versiones antiguas</div><div class="t" style="left:501px;top:36px;font-size:12px;color:#6d6d6d;letter-spacing:-.2px">24/04/2014 13:51</div><div class="t" style="left:621px;top:36px;font-size:12px;color:#6d6d6d;letter-spacing:-.2px">Carpeta de archivos</div></div><div id="exd" class="a"><svg class="a" style="left:18px;top:3px" width="38" height="44" viewBox="0 0 38 44"><defs><linearGradient id="bf" x1="0" y1="0" x2="1" y2="0"><stop offset="0" stop-color="#e6c964"/><stop offset=".5" stop-color="#fbf0b8"/><stop offset="1" stop-color="#ecd27a"/></linearGradient></defs><ellipse cx="22" cy="40" rx="14" ry="3" fill="#cfd6df" opacity=".7"/><path d="M4 3 L13 1 L14 40 L5 37Z" fill="#e9cf6a" stroke="#cfae45" stroke-width=".8"/><path d="M13 1 L24 6 L26 41 L14 40Z" fill="url(#bf)" stroke="#d3b54a" stroke-width=".7"/><path d="M24 9 L31 8 L32 36 L26 41Z" fill="#efd884" stroke="#cfae45" stroke-width=".8"/></svg><div class="t" style="left:79px;top:8px;font-size:12px;color:#1e395b;letter-spacing:.5px">3 elementos</div></div></div></div>
<div id="id" class="a"><svg class="a" style="left:9px;top:10px" width="17" height="15" viewBox="0 0 17 15"><path d="M1.200 4 C2.500 1.800 4.500 2 6.500 2.800 C8 3.400 9.500 3 10.500 1.800" stroke="#e8101a" stroke-width="2.300" fill="none"/><path d="M7.800 3 L4 13.500" stroke="#e8101a" stroke-width="2.200" fill="none"/><path d="M11.500 3.500 L9.300 13.500" stroke="#e8101a" stroke-width="1.900" fill="none"/><path d="M15 5.500 L10.500 9.200 L14.500 13.200 M13.500 3.800 L15.800 5" stroke="#e8101a" stroke-width="1.800" fill="none"/></svg><div id="idt" class="t">crwler.py - C:\Users\Jaratech\Desktop\aimalert-repo\crwler\crwler.py</div><div class="wb wbi" style="left:979px;width:31px;top:8px;height:17px"><div class="a" style="left:9px;top:8px;width:11px;height:4px;border:1px solid #4a5566;background:#fff;border-radius:1px"></div></div><div class="wb wbi" style="left:1012px;width:31px;top:8px;height:17px"><div class="a" style="left:10px;top:3px;width:10px;height:8px;border:1px solid #4a5566;background:#fff;border-radius:1px"><div class="a" style="left:2px;top:2px;width:4px;height:2px;border:1px solid #4a5566"></div></div></div><div class="wb wbi" style="left:1045px;width:31px;top:8px;height:17px"><svg class="a" style="left:9px;top:2px" width="12" height="10" viewBox="0 0 12 10"><path d="M1.5 1 L10.5 9 M10.5 1 L1.5 9" stroke="#4a5566" stroke-width="3.4"/><path d="M1.8 1.3 L10.2 8.7 M10.2 1.3 L1.8 8.7" stroke="#fff" stroke-width="1.6"/></svg></div><div id="idm" class="a"><span style="left:6px">File</span><span style="left:38px">Edit</span><span style="left:72px">Format</span><span style="left:124px">Run</span><span style="left:159px">Options</span><span style="left:215px">Windows</span><span style="left:278px">Help</span></div><div id="idc" class="a"><pre>    <span class="k">def</span> <span class="f">create_task_data</span>(self, url, priority=0):
        <span class="s">"""Creates the bundle of metadata related to the url task"""</span>
        <span class="b">print</span> stack()[0][3], datetime.now()
        <span class="k">return</span> JobTask.create_or_update(self.es_handler,
                                        url=url,
                                        priority=priority)

    <span class="k">def</span> <span class="f">_get_url</span>(self, url):
        <span class="s">"""GET a url and return the response"""</span>
        <span class="b">print</span> stack()[0][3], datetime.now()
        resp = <span class="b">None</span>
        max_retries = 3
        <span class="k">while</span> (<span class="k">not</span> resp <span class="k">and</span> max_retries &gt; 0):
            <span class="b">print</span> max_retries
            <span class="k">try</span>:
                resp = requests.get(url=url,
                                    proxies=self.proxies,
                                    headers=self.HEADERS)
            <span class="k">except</span> (requests.exceptions.ConnectionError,
                    requests.exceptions.ChunkedEncodingError):
                sleep(1)
                max_retries -= 1
            <span class="k">except</span> <span class="b">Exception</span> <span class="k">as</span> e:
                <span class="b">print</span> <span class="s">"Excepcion recuperando url"</span>, e
                sleep(1)
                max_retries -= 1
        <span class="k">if</span> max_retries == 0:
            <span class="b">print</span> <span class="s">"No se pudo recuperar la respuesta"</span>, resp
            <span class="k">return</span> <span class="b">None</span>
        self.urls_fetched += 1 <span class="k">if</span> resp.status_code == 200 <span class="k">else</span> 0
        <span class="k">return</span> resp


<span class="k">class</span> <span class="f">ServerCrwler</span>(Crwler):
    <span class="s">"""Main crawler, sends first the sitemap to ElasticSearch"""</span>

    <span class="k">def</span> <span class="f">run</span>(self):
        <span class="s">"""Main process for ServerCrwler"""</span>
        <span class="b">super</span>(ServerCrwler, self).run()</pre><div id="idsb" class="a"><div class="sbk" style="top:0"><svg class="a" style="left:3px;top:5px" width="8" height="5"><path d="M0 4.5 L4 .5 L8 4.5Z" fill="#000"/></svg></div><div class="sbk" style="top:626px"><svg class="a" style="left:3px;top:6px" width="8" height="5"><path d="M0 .5 L4 4.5 L8 .5Z" fill="#000"/></svg></div><div class="sbk" style="top:515px;height:88px"></div></div></div><div id="ids" class="a"><div class="lc" style="left:989px;width:41px">Ln: 242</div><div class="lc" style="left:1031px;width:39px">Col: 29</div></div></div>
<div id="mg" class="a"><svg class="a" style="left:7px;top:7px" width="19" height="19" viewBox="0 0 18 18"><rect x="3.2" y="3.2" width="11.6" height="11.6" rx="1.2" transform="rotate(45 9 9)" fill="#e84e31"/><path d="M7.2 5.2 L9.4 7.4 V12.4 M9.4 8 L11.6 10.2" stroke="#fff" stroke-width="1.1" fill="none"/><circle cx="9.4" cy="7.4" r="1" fill="#fff"/><circle cx="9.4" cy="12.4" r="1" fill="#fff"/><circle cx="11.6" cy="10.2" r="1" fill="#fff"/></svg><div id="mgt" class="t">MINGW32:/c/Users</div><div id="mgk" class="a"><pre><span class="c">@@ -222,6</span>



<span class="p">+</span>
<span class="p">+</span>
<span class="p">+</span>
<span class="p">+</span>
<span class="p">+</span>
<span class="p">+</span>
<span class="p">+</span>
<span class="p">+</span>



<span class="w">diff --git</span>
<span class="w">index 57c</span>
<span class="w">--- a/job</span>
<span class="w">+++ b/job</span>
<span class="c">@@ -80,6 </span>

     def 

<span class="p">+</span>


     @cla

<span class="g">Jaratech@</span>
$ git che

<span class="g">Jaratech@</span>
$ git sta
On branch
Your bran

Changes n
  (use "g
  (use "g

<span class="r">        m</span>

no change

<span class="g">Jaratech@</span>
$ git add

<span class="g">Jaratech@</span>
$ git com
or de buc
[master 2
r de bucl
 1 file c

<span class="g">Jaratech@</span>
$ git pus
Counting 
Compressi
Writing o
Total 3 (
To git@bi
   509217

<span class="g">Jaratech@</span>
$</pre></div></div>
<div id="wx" class="a"><svg class="a" style="left:9px;top:10px" width="16" height="14" viewBox="0 0 16 14"><rect x=".5" y=".5" width="15" height="12" fill="#f4f6f4" stroke="#b8bcc0"/><rect x="2" y="2" width="6" height="8" fill="#3d8f74"/><rect x="9" y="8" width="3" height="2" fill="#9fb7ad"/><rect x="13" y="2" width="1" height="6" fill="#7d9c90"/></svg><div id="wxt" class="t">wxPython: stdout/stderr</div><div class="wb" style="left:493px;width:31px"><div class="a" style="left:9px;top:7px;width:11px;height:4px;border:1px solid #2f3b4d;background:#fff;border-radius:1px"></div></div><div class="wb" style="left:526px;width:31px"><div class="a" style="left:10px;top:3px;width:10px;height:9px;border:1px solid #2f3b4d;background:#fff;border-radius:1px"><div class="a" style="left:2px;top:2px;width:4px;height:3px;border:1px solid #2f3b4d"></div></div></div><div class="wb wbx" style="left:559px;width:31px"><svg class="a" style="left:9px;top:3px" width="12" height="10" viewBox="0 0 12 10"><path d="M2 1.500 L10 8.500 M10 1.500 L2 8.500" stroke="#4a1f1a" stroke-width="4.200" /><path d="M2.300 1.800 L9.700 8.200 M9.700 1.800 L2.300 8.200" stroke="#fff" stroke-width="2.400"/></svg></div><div id="wxc" class="a"><pre>stopped 2014-04-25 11:47:06.075000
_grab_data_from_elastic 2014-04-25 11:47:06.115000
_can_fetch 2014-04-25 11:47:06.316000
process_url 2014-04-25 11:47:06.356000
_process_profile_url 2014-04-25 11:47:06.396000
_get_url 2014-04-25 11:47:06.436000
3
3
3
3
3
3
3
3
3
3
3
3
3
3
3
3
3
3
3
3
3
3
3
3
3
3
3
3
3
3
3
3
3
3
3
3
3
3
3
3
3
3
3
3
3
3
3
3
3
3
3
3
3
3
3
3
3
3
3
3
3
3
3
3</pre><div id="wxsb" class="a"><div class="sbb" style="top:1px"><svg class="a" style="left:3px;top:5px" width="7" height="5"><path d="M0 4.5 L3.5 .5 L7 4.5Z" fill="#555"/></svg></div><div class="sbb" style="top:905px"><svg class="a" style="left:3px;top:6px" width="7" height="5"><path d="M0 .5 L3.5 4.5 L7 .5Z" fill="#555"/></svg></div><div class="a" style="left:0px;top:753px;width:15px;height:15px;border:1px solid #2f5f8c;border-radius:2px;background:linear-gradient(90deg,#b4e0fa 0,#8ed0f6 48%,#4db4f0 52%,#5cbcf2 100%)"></div></div></div></div>
<div id="tb" class="a"><div class="a" style="left:0;top:0;width:58px;height:39px;background:linear-gradient(#8296b2,#7d91ad 50%,#8599b4)"></div><svg class="a" style="left:8px;top:1px" width="38" height="38" viewBox="0 0 38 38"><defs><radialGradient id="so" cx=".5" cy=".3" r=".75"><stop offset="0" stop-color="#9fd8ff"/><stop offset=".45" stop-color="#2f86d8"/><stop offset="1" stop-color="#0b3a86"/></radialGradient></defs><circle cx="19" cy="19" r="17.500" fill="url(#so)" stroke="#2a4a7c" stroke-width="1"/><path d="M10 12.500 q4 -2.500 8 -.5 l-1.300 6.500 q-4 -2 -8 .5Z" fill="#f0642a"/><path d="M19.500 12.300 q4 2 8.500 -.5 l-1.300 6.500 q-4.500 2.500 -8.500 .5Z" fill="#8fc83a"/><path d="M8.300 20.500 q4 -2.500 8 -.5 l-1.300 6.500 q-4 -2 -8 .5Z" fill="#3fa8f0"/><path d="M17.800 20.300 q4 2 8.500 -.5 l-1.300 6.500 q-4.500 2.500 -8.500 .5Z" fill="#f8c630"/><path d="M3 17 a16 16 0 0 1 32 0 q-16 -8 -32 0z" fill="#fff" opacity=".25"/></svg><div class="tk" style="left:63px;width:56px"></div><div class="tk" style="left:435px;width:52px;background:linear-gradient(#e4eefa,#d0e0f3)"></div><div class="tk" style="left:59px;width:55px"></div><div class="tk" style="left:183px;width:59px"></div><div class="tk" style="left:245px;width:59px"></div><div class="tk" style="left:307px;width:59px"></div><div class="tk" style="left:369px;width:59px"></div><div class="tk" style="left:431px;width:52px;background:linear-gradient(#eef4fc 0,#dbe8f7 48%,#cbdcf1 52%,#dce9f8 100%);border-color:#8aa2c2"></div><svg class="a" style="left:70px;top:5px" width="33" height="30" viewBox="0 0 33 30"><path d="M1 5 h11 l2 2 h17 v17 H1Z" fill="#f0d27a" stroke="#cfa84a" stroke-width=".8"/><rect x="3" y="3" width="4" height="2.500" fill="#4fb04a"/><rect x="11" y="4" width="4" height="2.500" fill="#e04a3a"/><rect x="20" y="5" width="4" height="2.500" fill="#f0e08a"/><path d="M1 10 h31 v14 H1Z" fill="#f8e6a0" stroke="#d9b85a" stroke-width=".6"/><path d="M6 29 V19 q0 -2 2 -2 h17 q2 0 2 2 V29 h-4 v-5 H10 v5Z" fill="#8fd0f4" stroke="#5aa8d8" stroke-width=".8"/><rect x="9" y="19" width="15" height="3" fill="#d4eefc"/></svg><svg class="a" style="left:135px;top:3px" width="33" height="33" viewBox="0 0 28 28"><circle cx="14" cy="14" r="12.500" fill="url(#ffo)"/><circle cx="15.500" cy="11.500" r="8" fill="url(#ffb)"/><path d="M1.600 13 C1.500 9 3 6 5 4.500 C5 6 5.500 7 6.500 7.500 C7 5.500 8.500 4 10.500 3.500 C9.500 5 9.500 6.500 10.500 8 C12 8.200 13 9 13.500 10 C12 10 11 10.500 10.500 11.500 C11 14 13 15.500 16 15.500 C19 15.500 20.500 14 21 12 C22.500 15 21.500 19 18.500 21 C15 23 10 22.500 7 20 C4 18 2 16 1.600 13Z" fill="#ee6a1e"/><path d="M22 5 C26.500 9 27.500 17 23 22.500 C19.500 26.500 13 27.500 8 25 C14 26 20 23.500 22.500 18.500 C24.500 14 24 9 22 5Z" fill="#fbb82a"/></svg><svg class="a" style="left:194px;top:1px" width="38" height="38" viewBox="0 0 18 18"><rect x="3.200" y="3.200" width="11.600" height="11.600" rx="1.200" transform="rotate(45 9 9)" fill="#e84e31"/><path d="M6.600 4.600 L9.300 7.300 V12.600 M9.300 7.800 L11.700 10.200" stroke="#fff" stroke-width=".8" fill="none"/><circle cx="9.300" cy="7.300" r="1" fill="#fff"/><circle cx="9.300" cy="12.600" r="1" fill="#fff"/><circle cx="11.700" cy="10.200" r="1" fill="#fff"/></svg><svg class="a" style="left:259px;top:7px" width="31" height="26" viewBox="0 0 31 26"><rect x=".5" y=".5" width="30" height="25" fill="#050505" stroke="#3a3a3a"/><rect x="1" y="1" width="29" height="3" fill="#c9c9c9"/><rect x="23" y="1.500" width="2" height="2" fill="#555"/><rect x="26" y="1.500" width="2" height="2" fill="#555"/><text x="4" y="13.500" font-family="Liberation Mono,monospace" font-weight="bold" font-size="8.500" fill="#fff">C:\_</text></svg><svg class="a" style="left:321px;top:4px" width="32" height="32" viewBox="0 0 32 32"><path d="M1 10 L4 8 V24 L1 25Z" fill="#b9bec4" stroke="#7f868e" stroke-width=".5"/><path d="M6 4 L29 7 L28 24 L6 22Z" fill="#dadde1" stroke="#8a9097" stroke-width=".8"/><path d="M8 6.500 L27 9 L26.200 22 L8 20Z" fill="#16301c"/><path d="M9 17 l2 -7 2 8 2.500 -9 2 8 2 -6 2 7 2 -5 1.500 4" stroke="#3fe05a" stroke-width="1.400" fill="none"/><path d="M13 23 L21 24 L22 28 L12 27.500Z" fill="#c9cdd2"/><ellipse cx="17" cy="29" rx="8" ry="2" fill="#dfe2e6" stroke="#a0a6ad" stroke-width=".5"/></svg><svg class="a" style="left:384px;top:3px" width="32" height="34" viewBox="0 0 32 34"><path d="M2 1 h14 l5 5 v19 H2Z" fill="#f4f4f4" stroke="#b9bec4" stroke-width=".8"/><path d="M4 5 h9 M4 8 h12 M4 11 h12 M4 14 h8 M4 17 h6" stroke="#c9ced6" stroke-width="1.200" stroke-dasharray="2 1"/><path d="M19.500 11 q-5 0 -5 4 v3 h6 v1 h-8 q-3.500 0 -3.500 5 q0 5 3.500 5 h2.500 v-3.500 q0 -3 3 -3 h5 q2.500 0 2.500 -2.500 V15 q0 -4 -6 -4z" fill="#3f7fbf"/><path d="M20.500 33 q5 0 5 -4 v-3 h-6 v-1 h8 q3.500 0 3.500 -5 q0 -5 -3.500 -5 h-2.500 v3.500 q0 3 -3 3 h-5 q-2.500 0 -2.500 2.500 V29 q0 4 6 4z" fill="#f8cf3a"/><circle cx="17" cy="14" r="1" fill="#fff"/><circle cx="23" cy="30" r="1" fill="#fff"/></svg><svg class="a" style="left:441px;top:3px" width="34" height="33" viewBox="0 0 34 33"><path d="M6 12 h25 l-1 19 H8Z" fill="#3f78b8" stroke="#2a5a96" stroke-width=".6"/><rect x="12" y="1" width="20" height="18" fill="#16213a"/><path d="M24 9 l3.500 3 -3.500 3" stroke="#fff" stroke-width="1.300" fill="none"/><rect x="13" y="23" width="12" height="7" fill="#c9ced6" stroke="#8a9097" stroke-width=".5"/><path d="M9 1 q-6 0 -6 4.500 v3.500 h7 v1.200 H2 q-1.500 3 -.5 7 q.5 2.500 3 2.500 h2.500 v-4 q0 -3 3 -3 h5 q2.500 0 2.500 -2.500 V5.500 q0 -4.500 -6 -4.500z" fill="#f4c72a" stroke="#c99a1a" stroke-width=".5"/><circle cx="6.500" cy="4.500" r="1.100" fill="#fff"/></svg><div class="a" style="left:487px;top:1px;width:1px;height:38px;background:#8aa2c2"></div><div class="a" style="left:490px;top:1px;width:1px;height:38px;background:#8aa2c2"></div><div id="tray" class="a"><span class="w" style="left:63px;top:11px">ES</span><svg class="a" style="left:93px;top:17px" width="9" height="6"><path d="M0 5.500 L4.500 .5 L9 5.500Z" fill="#f1f4f8"/></svg><svg class="a" style="left:113px;top:12px" width="18" height="18" viewBox="0 0 18 18"><path d="M2 1 V17" stroke="#f4f6f9" stroke-width="1.600"/><path d="M3 2 q3 -2 6 0 q3 2 6 0 v7 q-3 2 -6 0 q-3 -2 -6 0z" fill="#f4f6f9" stroke="#5a6a80" stroke-width=".5"/><circle cx="12" cy="12.500" r="4.500" fill="#e0262a" stroke="#fff" stroke-width=".6"/><path d="M10 10.500 l4 4 M14 10.500 l-4 4" stroke="#fff" stroke-width="1.400"/></svg><svg class="a" style="left:137px;top:12px" width="18" height="18" viewBox="0 0 18 18"><rect x="5.500" y="4.500" width="11" height="9" fill="#5a6a7c" stroke="#f4f6f9" stroke-width="1.200"/><rect x="8" y="15" width="6" height="1.500" fill="#f4f6f9"/><rect x="10" y="13.500" width="2" height="2" fill="#f4f6f9"/><path d="M3.500 1 v4 M1.500 2 v3.500 h4 V2 M3.500 5.500 V15 h3" stroke="#f4f6f9" stroke-width="1.200" fill="none"/></svg><svg class="a" style="left:161px;top:12px" width="18" height="18" viewBox="0 0 18 18"><path d="M1 6.500 h3 L8 3 v12 L4 11.500 H1Z" fill="#f4f6f9" stroke="#5a6a80" stroke-width=".4"/><g fill="none" stroke="#f4f6f9" stroke-width="1.200" stroke-linecap="round"><path d="M10.500 6.500 q1.500 2.500 0 5"/><path d="M12.800 5 q2.500 4 0 8"/><path d="M15 3.500 q3.500 5.500 0 11" opacity=".7"/></g></svg><span class="w" style="left:211px;top:6px;letter-spacing:-.4px">12:50</span><span class="w" style="left:196px;top:23px;letter-spacing:-.25px">25/04/2014</span><div class="a" style="left:266px;top:0;width:14px;height:39px;background:linear-gradient(90deg,#5f7088,#76879f 40%,#6a7b93);border-left:1px solid #a5b4c9;border-right:0"></div></div></div>
<div id="vbs" class="a"><svg class="a" style="left:1654px;top:3px" width="16" height="17" viewBox="0 0 16 17"><rect x=".5" y=".5" width="13" height="15" rx="1.500" fill="#4f96e0" stroke="#2a64b0"/><circle cx="7" cy="7" r="4" fill="#dcebfa" stroke="#2a64b0" stroke-width=".8"/><path d="M7 7 L3.500 13" stroke="#f4f8fc" stroke-width="1.600"/><circle cx="12" cy="13" r="3.200" fill="#e8242a" stroke="#fff" stroke-width=".5"/></svg><svg class="a" style="left:1674px;top:3px" width="16" height="16" viewBox="0 0 16 16"><circle cx="8" cy="8" r="7.300" fill="#e6e4e1" stroke="#b4b1ad"/><circle cx="8" cy="8" r="2.600" fill="#cfccc8" stroke="#b4b1ad" stroke-width=".7"/><circle cx="8" cy="8" r="1" fill="#f4f4f4"/></svg><svg class="a" style="left:1694px;top:3px" width="18" height="17" viewBox="0 0 18 17"><path d="M1.500 15.500 L3.500 11 L10 4.500 L13 7.500 L6.500 14Z" fill="#3f8ae0" stroke="#1c5cb0" stroke-width=".8"/><path d="M10.500 4 L13 1.500 L16.500 5 L14 7.500Z" fill="#f4f6f8" stroke="#6a7480" stroke-width=".7"/><path d="M1 16 l2 -4" stroke="#1c5cb0" stroke-width="1.200"/></svg><svg class="a" style="left:1716px;top:3px" width="17" height="17" viewBox="0 0 17 17"><rect x="6.500" y=".8" width="9.500" height="7.500" fill="#4f96e0" stroke="#1c4c90" stroke-width=".9"/><rect x="1" y="6.500" width="9.500" height="7.500" fill="#7fb6f0" stroke="#1c4c90" stroke-width=".9"/><rect x="2.300" y="7.800" width="7" height="4.800" fill="#e8f2fc"/><rect x="4" y="14.500" width="4" height="1.500" fill="#4a5a70"/><rect x="9.500" y="9" width="4" height="1.300" fill="#4a5a70"/></svg><svg class="a" style="left:1737px;top:4px" width="17" height="15" viewBox="0 0 17 15"><path d="M1 2 h5.500 l1.500 1.500 H16 V14 H1Z" fill="#3f8ae0" stroke="#2a64b0" stroke-width=".8"/><rect x="1.400" y="5" width="14.200" height="8.600" fill="#6fb0f0"/></svg><svg class="a" style="left:1757px;top:5px" width="17" height="13" viewBox="0 0 17 13"><path d="M1 3.500 L4.500 5.500 V9 L1 11Z" fill="#555"/><rect x="4.500" y="2.500" width="11.500" height="9" rx="1" fill="#3a3a3a" stroke="#222" stroke-width=".6"/><rect x="6" y="4" width="8.500" height="2" fill="#8a8a8a"/></svg><svg class="a" style="left:1778px;top:3px" width="17" height="17" viewBox="0 0 17 17"><rect x="1.500" y="1.500" width="14" height="14" rx="1.500" fill="#5a5ad8" stroke="#3a3ab0" stroke-dasharray="1.300 1" stroke-width="1.600"/><rect x="3.500" y="3.500" width="10" height="10" fill="#e8eafc"/><path d="M6.500 5 v4.500 q2 3 4 0 V5" stroke="#3a3ab0" stroke-width="1.600" fill="none"/></svg><div class="a" style="left:1801px;top:3px;width:1px;height:16px;background:#b5b2ae"></div><div class="a" style="left:1802px;top:3px;width:1px;height:16px;background:#e0deda"></div><svg class="a" style="left:1807px;top:2px" width="18" height="18" viewBox="0 0 18 18"><circle cx="8" cy="9" r="7.300" fill="#3f9ae8" stroke="#1c5cb0" stroke-width=".8"/><path d="M2 7 q3 -5 7 -4.500 q-3 3 -1.500 6 q-3 3 -4 6 q-3 -3 -1.500 -7.500z" fill="#dceefc" opacity=".9"/><path d="M7 10 L12 5 L17 10 L12 15 Z" fill="#5fd03a" stroke="#2a8a1c" stroke-width=".8"/><path d="M10.500 7.500 l2.500 2.500 -2.500 2.500" stroke="#fff" stroke-width="1.300" fill="none"/></svg><svg class="a" style="left:1829px;top:2px" width="16" height="17" viewBox="0 0 16 17"><rect x=".7" y=".7" width="14.600" height="15.600" rx="2" fill="#f4f4f0" stroke="#8a8a84"/><path d="M5.500 3 h5 v5 h3 L8 13.500 L2.500 8 h3Z" fill="#3fc02a" stroke="#1c7a12" stroke-width=".8"/></svg><div class="t" style="left:1847px;top:5px;font-size:12px;color:#1c1c1c;letter-spacing:-.33px">Ctrl Derecho</div></div>
<div id="ft" class="a"><div class="t" style="left:3px;top:0;font-family:'Liberation Sans',sans-serif;font-weight:bold;font-size:10.500px;color:#5c5c5c">At <span style="color:#111">im9.eu</span>  since 2014-04-25, 1920×1080px pic.</div><div class="t" style="right:4px;top:0;font-family:'Liberation Sans',sans-serif;font-weight:bold;font-size:10.500px;color:#5c5c5c">AS v6 © 2014 ATA Walerian Walawski / SublimeStar.com</div></div>
</body></html>
